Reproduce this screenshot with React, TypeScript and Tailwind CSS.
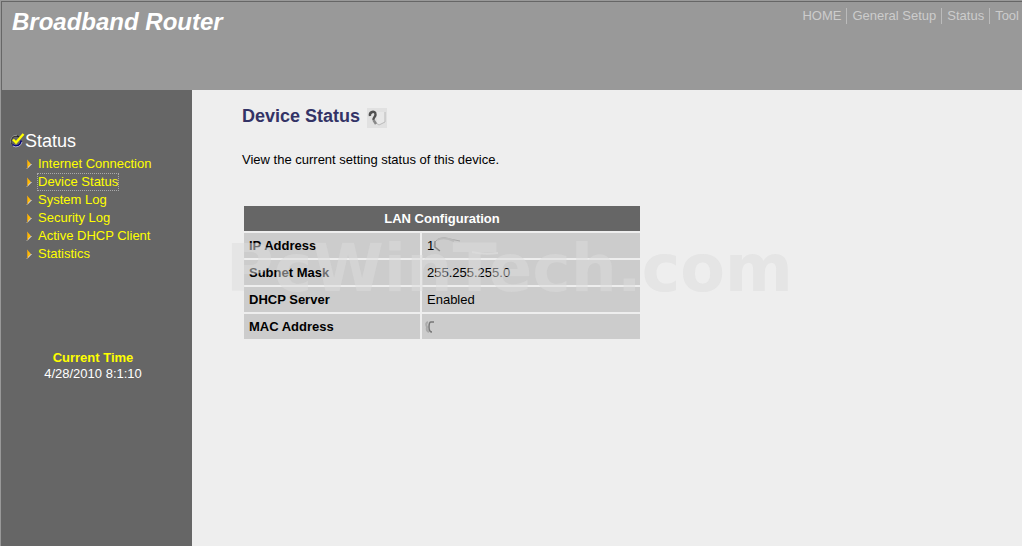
const topLinks = ['HOME', 'General Setup', 'Status', 'Tool']

const menuItems = [
  'Internet Connection',
  'Device Status',
  'System Log',
  'Security Log',
  'Active DHCP Client',
  'Statistics',
]

function CheckIcon() {
  return (
    <svg width="15" height="16" viewBox="0 0 15 16" aria-hidden="true">
      <circle cx="6" cy="8" r="5.2" fill="#666" />
      <path d="M2 11 A5 5 0 0 1 9 4" fill="none" stroke="#222" strokeWidth="1.2" />
      <path d="M1 10.5 A5.8 5.8 0 0 1 7 2.3" fill="none" stroke="#aaa" strokeWidth="0.8" />
      <path d="M2.5 11.5 A5 5 0 0 0 11 7.5" fill="none" stroke="#000080" strokeWidth="1.6" />
      <path d="M3 13 A6 6 0 0 0 12 9" fill="none" stroke="#ccd" strokeWidth="0.8" />
      <path d="M3 6.5 L6 9.5 L13.5 1" fill="none" stroke="#ffff00" strokeWidth="2.4" />
    </svg>
  )
}

function ArrowIcon() {
  return (
    <svg width="6" height="10" viewBox="0 0 6 10" aria-hidden="true">
      <path d="M1 0.5 L5 5 L1 9.5 Z" fill="#ffbb00" />
      <path d="M1 9.5 L5.5 5" fill="none" stroke="#eee" strokeWidth="1" />
      <path d="M1.5 1 V9" fill="none" stroke="#d89a20" strokeWidth="1" />
    </svg>
  )
}

function HelpIcon() {
  return (
    <svg width="20" height="20" viewBox="0 0 20 20" aria-hidden="true">
      <rect width="20" height="20" fill="#e1e1e1" />
      <path d="M10 4 V15 L12 17 L18 14 V4 Z" fill="#e8e8e8" />
      <path d="M9 15 L12 17 L18 14 V4" fill="none" stroke="#bbb" strokeWidth="1" />
      <path d="M3 8 C2 4 8 2 8.5 6 C9 9 6 9 6.5 12" fill="none" stroke="#505050" strokeWidth="2.4" />
      <path d="M6.5 12 L9 16" fill="none" stroke="#888" strokeWidth="2.4" />
    </svg>
  )
}

// Both private addresses are smudged out, only their first stroke is left
function SmudgedIp() {
  return (
    <span className="flex items-center">
      1
      <svg className="-my-2 -ml-1" width="72" height="22" viewBox="0 0 72 22" aria-hidden="true">
        <path d="M9 16 L4 12 Q3 7 8 4 Q14 1 20 4 L30 6" fill="none" stroke="#aaa" strokeWidth="1" />
        <path d="M5 6 L5 12 L10 16" fill="none" stroke="#888" strokeWidth="1.2" />
        <path d="M7 5 Q14 1 24 6" fill="none" stroke="#bbb" strokeWidth="2" />
        <path d="M42 17 Q54 20 68 18" fill="none" stroke="#d8d8d8" strokeWidth="2" />
      </svg>
    </span>
  )
}

function SmudgedMac() {
  return (
    <svg className="-ml-1" width="14" height="14" viewBox="0 0 14 14" aria-hidden="true">
      <path d="M5 2 Q2 3 4 7 Q3 11 6 12" fill="none" stroke="#aaa" strokeWidth="2" />
      <path d="M11 2 H8 Q6 2 6 7 Q6 12 9 12" fill="none" stroke="#777" strokeWidth="1.5" />
    </svg>
  )
}

const rows = [
  { label: 'IP Address', value: <SmudgedIp /> },
  { label: 'Subnet Mask', value: '255.255.255.0' },
  { label: 'DHCP Server', value: 'Enabled' },
  { label: 'MAC Address', value: <SmudgedMac /> },
]

export default function App() {
  return (
    <div className="flex min-h-screen flex-col border-l border-t border-[#999] bg-[#eee] font-['Liberation_Sans',Arial,sans-serif] text-[13px] leading-4 text-black">
      <header className="flex h-[89px] items-start justify-between border-l border-t border-[#666] bg-[#999] pl-[10px] pr-[3px] pt-[6px]">
        <h1 className="text-[24px] font-bold italic leading-7 text-white">Broadband Router</h1>
        <nav className="flex items-center text-[#ccc]">
          {topLinks.map((label, index) => (
            <a
              key={label}
              href="#"
              className={index === 0 ? 'pr-[5px]' : 'border-l border-[#bbb] px-[5px] last:pr-0'}
            >
              {label}
            </a>
          ))}
        </nav>
      </header>

      <div className="flex flex-1">
        <aside className="w-[191px] shrink-0 border-l border-[#666] bg-[#666] pt-[41px]">
          <h2 className="flex items-center pl-2 text-[18px] leading-5 text-white">
            <CheckIcon />
            Status
          </h2>
          <ul className="mt-1 pl-6">
            {menuItems.map((label) => (
              <li key={label} className="flex h-[18px] items-center gap-[6px]">
                <ArrowIcon />
                <a
                  href="#"
                  className={
                    label === 'Device Status'
                      ? 'text-[#ff0] outline-1 outline-dotted outline-[#aaa]'
                      : 'text-[#ff0]'
                  }
                >
                  {label}
                </a>
              </li>
            ))}
          </ul>
          <div className="mt-[87px] pr-2 text-center text-white">
            <p className="font-bold text-[#ff0]">Current Time</p>
            <p>4/28/2010 8:1:10</p>
          </div>
        </aside>

        <main className="flex-1 px-[50px] pt-4">
          <h2 className="flex items-center gap-[7px] text-[18px] font-bold leading-5 text-[#336]">
            Device Status
            <span className="-mb-1">
              <HelpIcon />
            </span>
          </h2>
          <p className="mt-[26px]">View the current setting status of this device.</p>

          <div className="relative mt-9 max-w-[400px]">
            <table className="w-full border-separate border-spacing-[2px]">
              <thead>
                <tr className="h-[25px] bg-[#666] text-white">
                  <th colSpan={2}>LAN Configuration</th>
                </tr>
              </thead>
              <tbody>
                {rows.map((row) => (
                  <tr key={row.label} className="h-[25px] bg-[#ccc]">
                    <th scope="row" className="w-[176px] px-[5px] text-left">
                      {row.label}
                    </th>
                    <td className="px-[5px]">{row.value}</td>
                  </tr>
                ))}
              </tbody>
            </table>
            <span className="pointer-events-none absolute -left-4 top-7 whitespace-nowrap font-['DejaVu_Sans',Verdana,sans-serif] text-[65px] font-bold leading-[74px] text-[#dcdcdc]/50">
              PcWinTech.com
            </span>
          </div>
        </main>
      </div>
    </div>
  )
}
